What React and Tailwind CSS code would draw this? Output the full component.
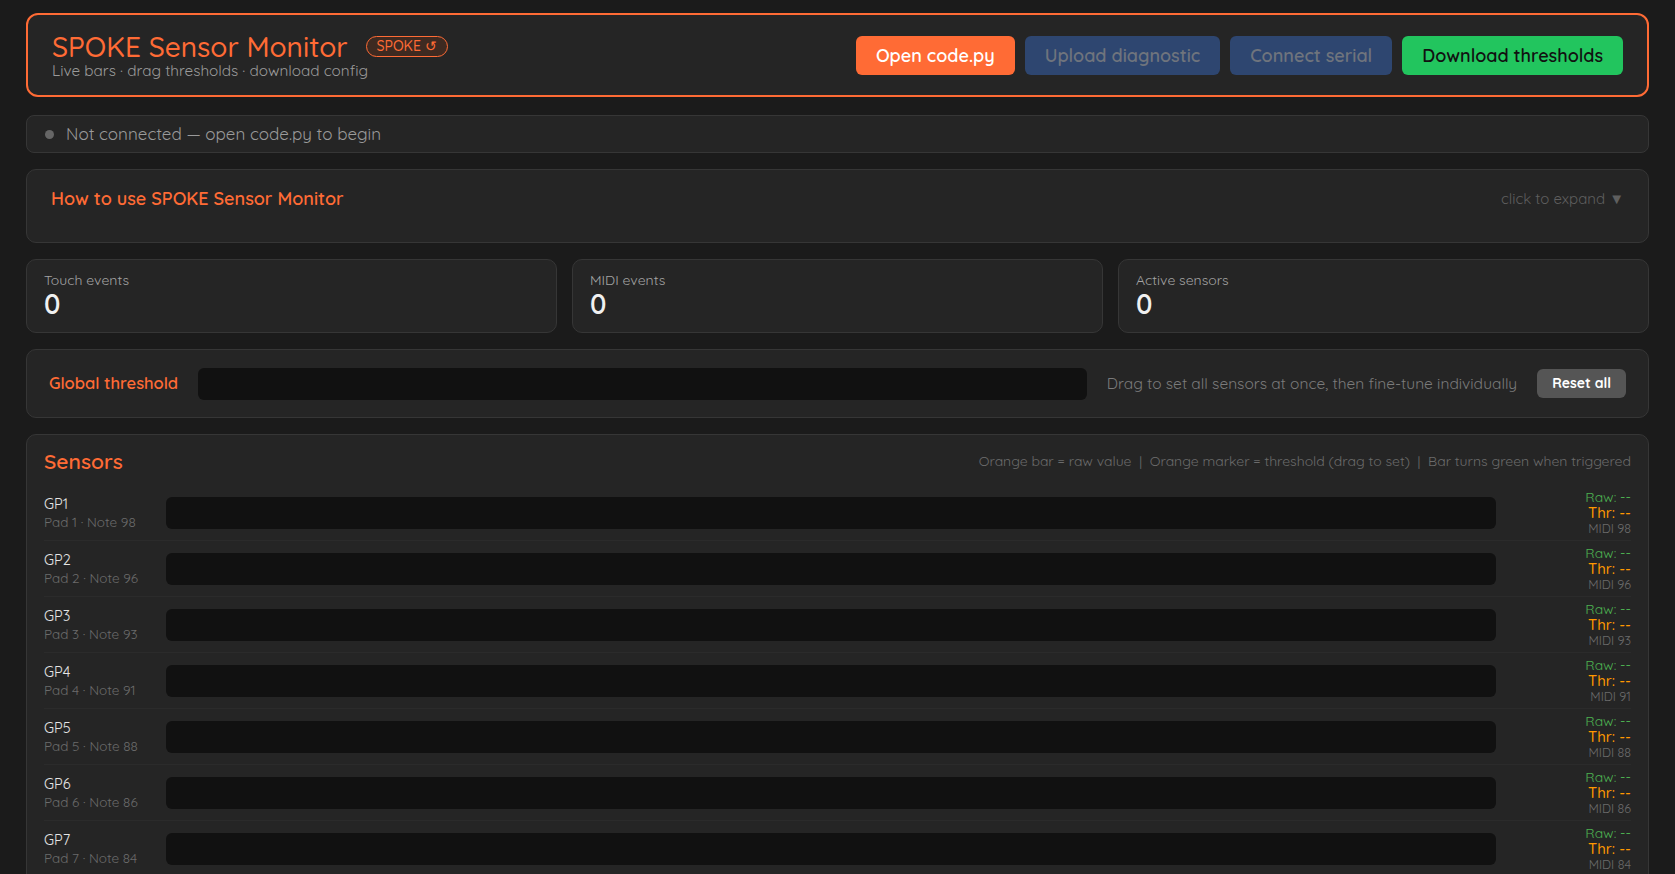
import React from 'react';

const font = { fontFamily: '"Quicksand", "Open Sans", "Noto Sans", sans-serif' };

const notes = [98, 96, 93, 91, 88, 86, 84, 81, 79, 76, 74, 72];

const sensors = notes.map((note, i) => ({
  name: `GP${i + 1}`,
  pad: i + 1,
  note,
}));

const StatCard = ({ label, value }) => (
  <div className="rounded-[10px] border border-[#363636] bg-[#252525] px-[17px] pt-[11px] pb-[13px]">
    <div className="text-[14px] leading-[18px] text-[#a3a3a3]">{label}</div>
    <div className="text-[27px] leading-[30px] font-semibold text-[#f0f0f0]">{value}</div>
  </div>
);

const SensorRow = ({ sensor }) => (
  <div className="flex items-center gap-3 border-b border-[#2b2b2b] py-[5px]">
    <div className="w-[110px] shrink-0">
      <div className="text-[14.5px] leading-[18px] text-[#e5e5e5]">{sensor.name}</div>
      <div className="text-[13.5px] leading-[18px] text-[#6b6b6b] whitespace-nowrap">
        Pad {sensor.pad} · Note {sensor.note}
      </div>
    </div>
    <div className="h-8 flex-1 rounded-md bg-[#111111]"></div>
    <div className="w-[123px] shrink-0 text-right">
      <div className="text-[14px] leading-[15px] text-[#4caf50]">Raw: --</div>
      <div className="text-[15px] leading-[16px] font-medium text-[#ff9800]">Thr: --</div>
      <div className="text-[12.5px] leading-[14px] text-[#6b6b6b]">MIDI {sensor.note}</div>
    </div>
  </div>
);

export default function App() {
  return (
    <div className="min-h-screen bg-[#1b1b1b] px-[26px] pt-[13px] pb-6" style={font}>
      {/* header */}
      <div className="mb-[18px] flex items-center justify-between rounded-xl border-2 border-[#ff6b35] bg-[#252525] px-6 h-[84px]">
        <div>
          <div className="flex items-center gap-[18px]">
            <h1 className="text-[28px] leading-[31px] font-medium text-[#ff6b35]">SPOKE Sensor Monitor</h1>
            <span className="rounded-full border border-[#ff6b35] bg-[#3e2a21] px-[10px] text-[14px] leading-[19px] font-medium text-[#ff6b35]">
              SPOKE ↺
            </span>
          </div>
          <div className="text-[15.3px] leading-[17px] text-[#9a9a9a]">
            Live bars · drag thresholds · download config
          </div>
        </div>
        <div className="flex items-center gap-[10px]">
          <button className="h-[39px] rounded-md bg-[#ff6b35] px-5 text-[18px] font-semibold text-white">
            Open code.py
          </button>
          <button className="h-[39px] rounded-md bg-[#2e4670] px-5 text-[18px] font-semibold text-[#6f747d]">
            Upload diagnostic
          </button>
          <button className="h-[39px] rounded-md bg-[#2e4670] px-5 text-[18px] font-semibold text-[#6f747d]">
            Connect serial
          </button>
          <button className="h-[39px] rounded-md bg-[#22c55e] px-5 text-[18px] font-semibold text-[#111111]">
            Download thresholds
          </button>
        </div>
      </div>

      <div className="flex flex-col gap-4">
        {/* status */}
        <div className="flex h-[38px] items-center gap-3 rounded-lg border border-[#363636] bg-[#252525] px-[18px]">
          <span className="h-[9px] w-[9px] rounded-full bg-[#666666]"></span>
          <span className="text-[17px] text-[#9a9a9a]">Not connected — open code.py to begin</span>
        </div>

        {/* how to */}
        <div className="flex items-start justify-between rounded-[10px] border border-[#363636] bg-[#252525] px-6 pt-[17px] pb-[31px]">
          <div className="text-[18px] leading-[24px] font-semibold text-[#ff6b35]">How to use SPOKE Sensor Monitor</div>
          <div className="text-[15px] leading-[24px] text-[#5f5f5f]">click to expand ▼</div>
        </div>

        {/* stats */}
        <div className="grid grid-cols-3 gap-[15px]">
          <StatCard label="Touch events" value="0" />
          <StatCard label="MIDI events" value="0" />
          <StatCard label="Active sensors" value="0" />
        </div>

        {/* global threshold */}
        <div className="flex h-[69px] items-center gap-5 rounded-[10px] border border-[#363636] bg-[#252525] px-[22px]">
          <div className="text-[16.5px] font-semibold text-[#ff6b35] whitespace-nowrap">Global threshold</div>
          <div className="h-8 flex-1 rounded-md bg-[#111111]"></div>
          <div className="text-[15.5px] text-[#7a7a7a] whitespace-nowrap">
            Drag to set all sensors at once, then fine-tune individually
          </div>
          <button className="h-[29px] rounded-md bg-[#555555] px-[15px] text-[14px] font-bold text-white">
            Reset all
          </button>
        </div>

        {/* sensors */}
        <div className="rounded-[10px] border border-[#363636] bg-[#252525] px-[17px] pt-3 pb-4">
          <div className="mb-[10px] flex items-center justify-between">
            <h2 className="text-[21px] leading-[28px] font-semibold text-[#ff6b35]">Sensors</h2>
            <div className="text-[14px] text-[#6b6b6b] whitespace-pre">
              Orange bar = raw value  |  Orange marker = threshold (drag to set)  |  Bar turns green when triggered
            </div>
          </div>
          <div>
            {sensors.map((s) => (
              <SensorRow key={s.name} sensor={s} />
            ))}
          </div>
        </div>
      </div>
    </div>
  );
}
